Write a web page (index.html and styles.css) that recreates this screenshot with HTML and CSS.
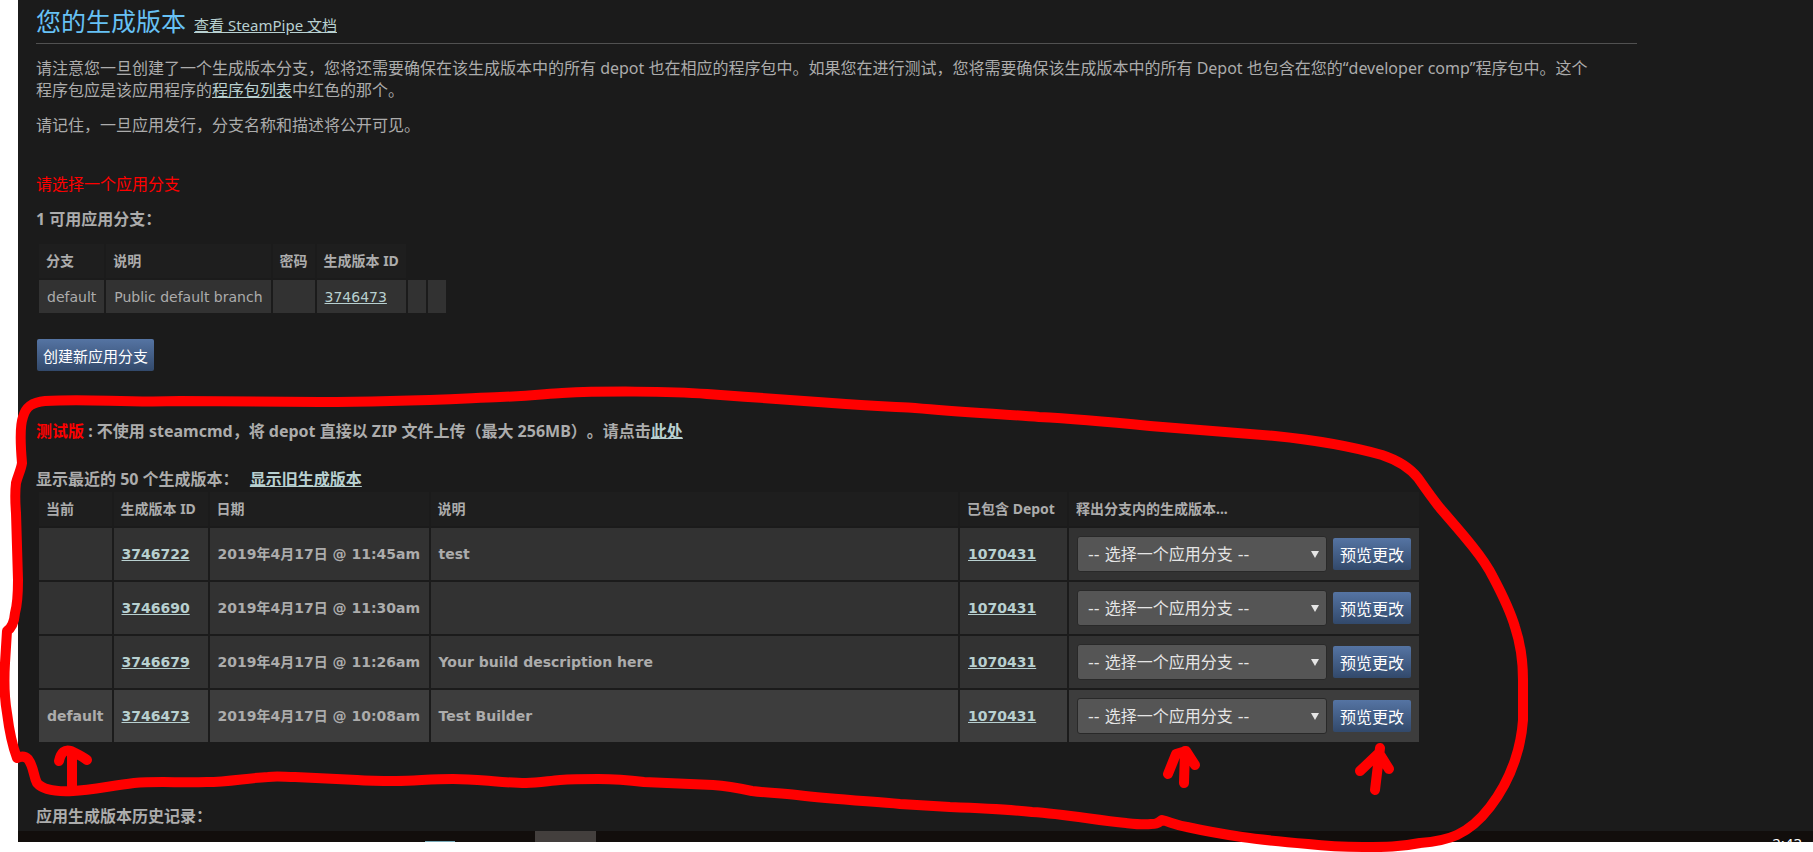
FILE: index.html
```html
<!DOCTYPE html>
<html lang="zh-CN">
<head>
<meta charset="utf-8">
<title>您的生成版本</title>
<link rel="stylesheet" href="styles.css">
</head>
<body>
<div class="screen">
<main class="page">
  <header class="page-head">
    <h1 class="title">您的生成版本</h1>
    <a class="doc-link" href="#">查看 SteamPipe 文档</a>
  </header>
  <p class="para">请注意您一旦创建了一个生成版本分支，您将还需要确保在该生成版本中的所有 depot 也在相应的程序包中。如果您在进行测试，您将需要确保该生成版本中的所有 Depot 也包含在您的“developer comp”程序包中。这个程序包应是该应用程序的<a href="#">程序包列表</a>中红色的那个。</p>
  <p class="para">请记住，一旦应用发行，分支名称和描述将公开可见。</p>
  <p class="warning">请选择一个应用分支</p>
  <h2 class="subhead">1 可用应用分支：</h2>
  <table class="grid branches">
    <thead><tr><th>分支</th><th>说明</th><th>密码</th><th>生成版本 ID</th></tr></thead>
    <tbody><tr><td>default</td><td>Public default branch</td><td></td><td><a href="#">3746473</a></td><td></td><td></td></tr></tbody>
  </table>
  <button class="btn create" type="button">创建新应用分支</button>
  <h2 class="subhead beta"><span class="beta-tag">测试版</span> : 不使用 steamcmd，将 depot 直接以 ZIP 文件上传（最大 256MB）。请点击<a href="#">此处</a></h2>
  <h2 class="subhead recent">显示最近的 50 个生成版本： <a href="#">显示旧生成版本</a></h2>
  <table class="grid builds">
    <colgroup><col class="c-current"><col class="c-id"><col class="c-date"><col><col class="c-depot"><col class="c-action"></colgroup>
    <thead><tr><th>当前</th><th>生成版本 ID</th><th>日期</th><th>说明</th><th>已包含 Depot</th><th>释出分支内的生成版本...</th></tr></thead>
    <tbody>
      <tr><td></td><td><a href="#">3746722</a></td><td>2019年4月17日 @ 11:45am</td><td>test</td><td><a href="#">1070431</a></td><td><div class="actions"><span class="picker"><select class="branch" aria-label="应用分支"><option>-- 选择一个应用分支 --</option></select></span><button class="btn" type="button">预览更改</button></div></td></tr>
      <tr><td></td><td><a href="#">3746690</a></td><td>2019年4月17日 @ 11:30am</td><td></td><td><a href="#">1070431</a></td><td><div class="actions"><span class="picker"><select class="branch" aria-label="应用分支"><option>-- 选择一个应用分支 --</option></select></span><button class="btn" type="button">预览更改</button></div></td></tr>
      <tr><td></td><td><a href="#">3746679</a></td><td>2019年4月17日 @ 11:26am</td><td>Your build description here</td><td><a href="#">1070431</a></td><td><div class="actions"><span class="picker"><select class="branch" aria-label="应用分支"><option>-- 选择一个应用分支 --</option></select></span><button class="btn" type="button">预览更改</button></div></td></tr>
      <tr class="live"><td>default</td><td><a href="#">3746473</a></td><td>2019年4月17日 @ 10:08am</td><td>Test Builder</td><td><a href="#">1070431</a></td><td><div class="actions"><span class="picker"><select class="branch" aria-label="应用分支"><option>-- 选择一个应用分支 --</option></select></span><button class="btn" type="button">预览更改</button></div></td></tr>
    </tbody>
  </table>
  <h2 class="subhead history">应用生成版本历史记录：</h2>
</main>
<footer class="taskbar"><span class="running"></span><span class="active-task"></span><span class="clock">2:43</span></footer>
<svg class="ink" width="1813" height="852" viewBox="0 0 1813 852" aria-hidden="true">
  <path d="M22 463C20 440 20 425 23 417C26 406 33 402 45 401C90 398 120 403 180 401L320 402C400 402 450 399 500 397C530 396 545 394 562 393C600 391 670 391 707 394C750 397 800 401 832 403C870 406 900 407 915 408C960 412 1000 414 1039 417C1080 419 1120 423 1150 426L1275 436C1315 440 1350 446 1382 455C1400 461 1410 468 1418 478C1425 488 1432 498 1440 508C1452 522 1462 533 1473 547C1481 557 1488 567 1493 577C1502 594 1510 610 1515 627C1521 645 1523 662 1523 680L1523 720C1522 735 1519 748 1515 760C1509 778 1500 794 1490 807C1480 820 1470 829 1457 835C1446 840 1433 842 1420 843C1400 847 1385 847 1363 847C1345 847 1325 846 1308 844C1285 842 1262 840 1242 837C1222 834 1205 831 1187 827C1176 825 1170 822 1162 820C1157 824 1155 824 1151 824C1143 825 1135 824 1126 823C1095 820 1065 814 1032 812C1005 809 978 808 950 807L900 804C865 801 830 799 797 795C780 793 768 793 752 791C738 788 728 786 713 785L644 782C628 780 615 779 598 779C585 779 573 779 560 780C548 781 538 783 526 783C514 783 503 782 491 781C478 780 466 779 453 779C430 779 415 781 396 781C382 781 370 781 357 780L295 777C285 777 277 776 268 777C247 778 228 782 207 782C180 783 158 781 134 783C110 786 90 790 73 791C55 792 43 790 37 783C33 775 34 767 28 759C25 756 21 756 17 758C12 745 9 729 7 713C4 696 4 680 5 663L7 631C10 629 14 625 15 613C18 602 18 590 18 580L16 513C15 500 15 491 16 483C18 475 21 470 22 463"/>
  <path d="M72 786L72 755M59 761C61 752 65 749 71 751C77 754 82 756 87 760"/>
  <path d="M1184 783L1185 751M1168 774L1176 754L1186 751L1195 765"/>
  <path d="M1375 790L1380 748M1360 771L1379 753L1389 769"/>
</svg>
</div>
</body>
</html>
```
FILE: styles.css
```css
* { box-sizing: border-box; }

body {
  margin: 0;
  background: #fff;
  color: #acacac;
  font: 16px/22px "Noto Sans", "Noto Sans CJK SC", sans-serif;
}

.screen {
  position: relative;
  min-height: 100vh;
  padding-left: 18px;
}

.page {
  background: #1b1b1b;
  padding: 3px 176px 4px 18px;
}

a { color: #b8d0d0; }

.page-head {
  display: flex;
  align-items: baseline;
  gap: 8px;
  border-bottom: 1px solid #515151;
  padding-bottom: 3px;
}

.title {
  margin: 0;
  color: #67c1f5;
  font-size: 25px;
  line-height: 37px;
  font-weight: 400;
}

.doc-link { font-size: 15px; }

.para { margin: 13px 0 12px; padding-right: 40px; }

.warning { margin: 37px 0 0; color: #f00; }

.subhead {
  margin: 13px 0 0;
  font-size: 16px;
  line-height: 22px;
  font-weight: 700;
}

.grid {
  margin-left: 1px;
  border-spacing: 2px;
}

.grid th {
  height: 34px;
  padding: 0 7px;
  background: #1e1e1e;
  font-size: 14px;
  line-height: 20px;
  text-align: left;
  white-space: nowrap;
}

.grid td {
  height: 33px;
  padding: 0 8px;
  background: #323232;
  font-family: "DejaVu Sans", "Noto Sans CJK SC", sans-serif;
  font-size: 14px;
  line-height: 20px;
}

.branches { margin-top: 12px; }

.branches td:empty { padding: 0 9px; }

.btn {
  height: 32px;
  padding: 0 6px;
  border: 0;
  border-radius: 2px;
  background: linear-gradient(#5574a3, #32496b);
  color: #fff;
  font-family: "Noto Sans", "Noto Sans CJK SC", sans-serif;
  font-size: 16px;
  font-weight: 400;
  white-space: nowrap;
}

.create { margin: 24px 0 0 1px; font-size: 15px; }

.beta { margin-top: 49px; text-spacing-trim: space-all; }

.beta-tag { color: #f00; }

.recent { margin-top: 26px; }

.recent a { margin-left: 7px; }

.builds { width: 100%; max-width: 1384px; }

.builds td { height: 52px; font-weight: 700; white-space: nowrap; }

.builds .live td { background: #3d3d3d; }

.c-current { width: 72px; }
.c-id { width: 94px; }
.c-date { width: 219px; }
.c-depot { width: 107px; }
.c-action { width: 350px; }

.actions { display: flex; align-items: center; gap: 6px; }

.actions .btn { padding: 0 7px; }

.picker {
  display: grid;
  flex: 1;
  align-items: center;
}

.picker::after {
  content: "";
  grid-area: 1 / 1;
  justify-self: end;
  margin-right: 8px;
  border: 4px solid transparent;
  border-top: 7px solid #e5e5e5;
  border-bottom: 0;
  pointer-events: none;
}

.branch {
  grid-area: 1 / 1;
  appearance: none;
  height: 36px;
  padding: 0 10px;
  border: 1px solid #292929;
  border-radius: 3px;
  background: #555;
  color: #e5e5e5;
  font-family: "DejaVu Sans", "Noto Sans CJK SC", sans-serif;
  font-size: 16px;
  font-weight: 400;
}

.history { margin-top: 61px; }

.taskbar {
  display: flex;
  height: 11px;
  background: #120e0c;
}

.running { width: 30px; height: 1px; margin: 10px 80px 0 407px; background: #76a9b8; }

.active-task { width: 61px; background: #433f3d; }

.clock {
  margin: 3px 11px 0 auto;
  color: #fff;
  font-size: 15px;
  line-height: 18px;
}

.ink {
  position: absolute;
  inset: 0 auto auto 0;
  z-index: 1;
  fill: none;
  stroke: #f00;
  stroke-width: 10;
  stroke-linecap: round;
  stroke-linejoin: round;
  pointer-events: none;
}
```
